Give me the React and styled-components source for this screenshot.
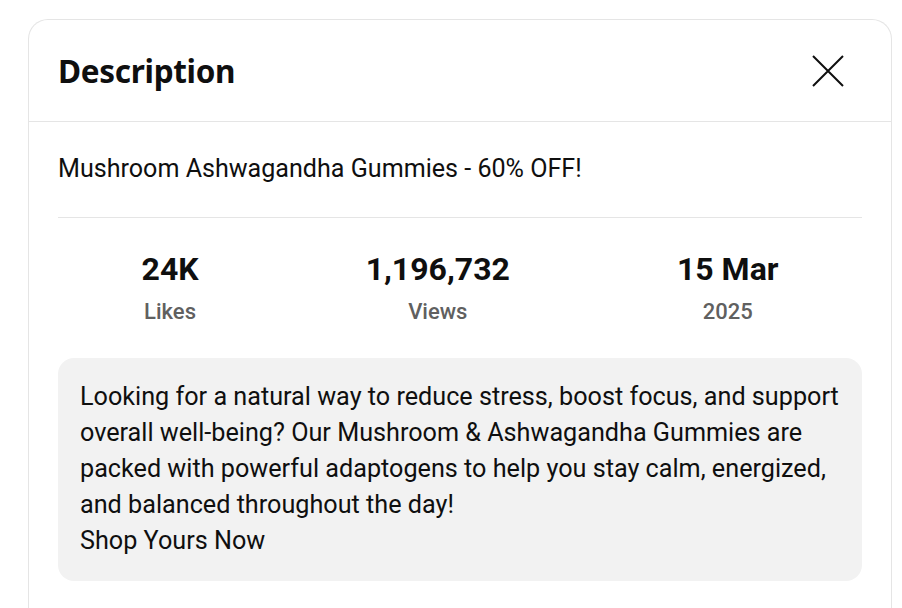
import styled, { createGlobalStyle } from 'styled-components'

const GlobalStyle = createGlobalStyle`
  body {
    margin: 0;
    background: #fff;
    font-family: Roboto, "Liberation Sans", sans-serif;
    color: #0f0f0f;
  }
`

const stats = [
  { value: '24K', label: 'Likes' },
  { value: '1,196,732', label: 'Views' },
  { value: '15 Mar', label: '2025' },
]

export default function App() {
  return (
    <>
      <GlobalStyle />
      <Panel>
        <Header>
          <Heading>Description</Heading>
          <CloseButton aria-label="Close">
            <svg width="32" height="32" viewBox="0 0 32 32">
              <path d="M1 1 L31 31 M31 1 L1 31" stroke="#0f0f0f" strokeWidth="2" fill="none" />
            </svg>
          </CloseButton>
        </Header>
        <Body>
          <Title>Mushroom Ashwagandha Gummies - 60% OFF!</Title>
          <Stats>
            {stats.map(s => (
              <Stat key={s.label}>
                <StatValue>{s.value}</StatValue>
                <StatLabel>{s.label}</StatLabel>
              </Stat>
            ))}
          </Stats>
          <DescBox>
            Looking for a natural way to reduce stress, boost focus, and support overall well-being? Our Mushroom &amp; Ashwagandha Gummies are packed with powerful adaptogens to help you stay calm, energized, and balanced throughout the day!
            <br />
            Shop Yours Now
          </DescBox>
        </Body>
      </Panel>
    </>
  )
}

const Panel = styled.div`
  margin: 19px 0 0 28px;
  width: 864px;
  height: 640px;
  box-sizing: border-box;
  border: 1px solid #e5e5e5;
  border-bottom: none;
  border-radius: 20px 20px 0 0;
  background: #fff;
`

const Header = styled.header`
  height: 101px;
  display: flex;
  align-items: center;
  justify-content: space-between;
  padding: 0 47px 0 29px;
  border-bottom: 1px solid #e5e5e5;
`

const Heading = styled.h2`
  margin: 0;
  font-family: "Noto Sans", sans-serif;
  font-weight: 700;
  font-size: 31.5px;
  letter-spacing: -0.3px;
`

const CloseButton = styled.button`
  border: none;
  background: none;
  padding: 0;
  width: 32px;
  height: 32px;
  display: flex;
  cursor: pointer;
`

const Body = styled.div`
  padding: 0 29px;
`

const Title = styled.div`
  font-size: 25.1px;
  line-height: 32px;
  padding: 31px 0 32px;
  border-bottom: 1px solid #e5e5e5;
`

const Stats = styled.div`
  display: flex;
  justify-content: space-around;
  padding: 32px 0 32px;
`

const Stat = styled.div`
  display: flex;
  flex-direction: column;
  align-items: center;
`

const StatValue = styled.div`
  font-size: 32px;
  font-weight: 700;
  line-height: 38px;
`

const StatLabel = styled.div`
  margin-top: 10px;
  font-size: 22px;
  font-weight: 500;
  line-height: 28px;
  color: #606060;
`

const DescBox = styled.div`
  background: #f2f2f2;
  border-radius: 16px;
  padding: 21px 8px 22px 22px;
  font-size: 25.2px;
  line-height: 36px;
`
